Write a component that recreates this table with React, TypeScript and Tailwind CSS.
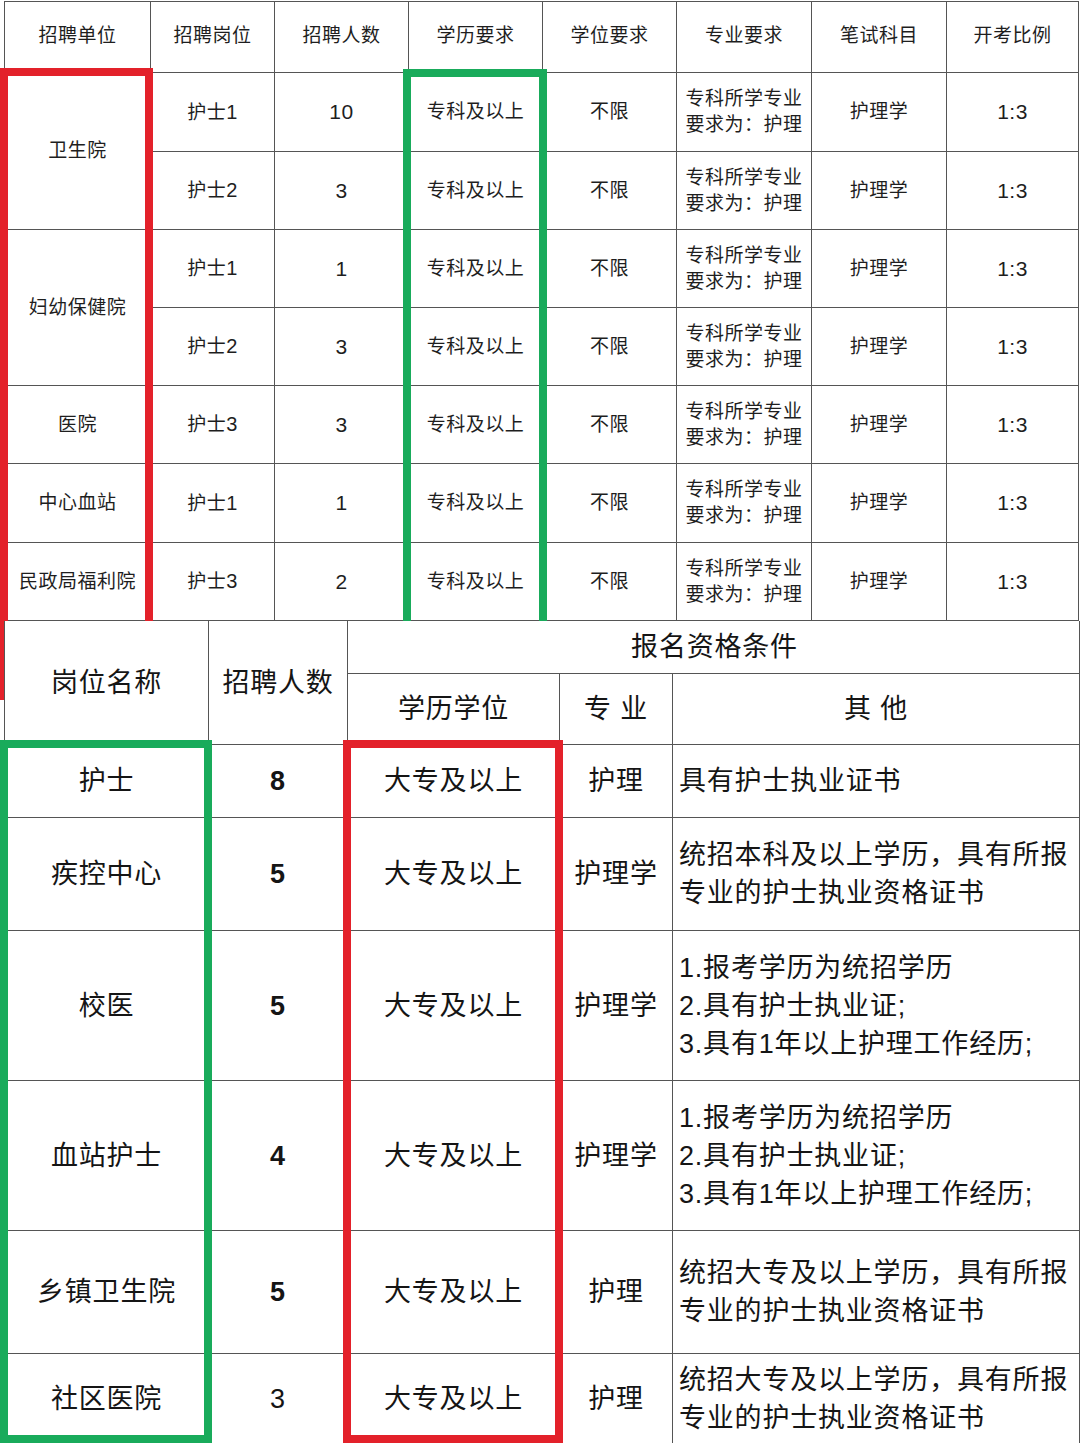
import React from "react";

const font = "font-['Liberation_Sans','Noto_Sans_CJK_SC',sans-serif]";

function C1({ children, className = "" }: { children: React.ReactNode; className?: string }) {
  return (
    <div className={`bg-white flex items-center justify-center text-center text-[19px] leading-[26px] tracking-[0.5px] text-[#1e1e1e] ${className}`}>
      {children}
    </div>
  );
}

function C2({ children, className = "" }: { children: React.ReactNode; className?: string }) {
  return (
    <div className={`bg-white flex items-center text-[27px] leading-[38px] tracking-[0.8px] text-[#151515] ${className}`}>
      {children}
    </div>
  );
}

const t1Rows: { unit?: string; span?: boolean; pos: string; n: string }[] = [
  { unit: "卫生院", span: true, pos: "护士1", n: "10" },
  { pos: "护士2", n: "3" },
  { unit: "妇幼保健院", span: true, pos: "护士1", n: "1" },
  { pos: "护士2", n: "3" },
  { unit: "医院", pos: "护士3", n: "3" },
  { unit: "中心血站", pos: "护士1", n: "1" },
  { unit: "民政局福利院", pos: "护士3", n: "2" },
];

const t2Rows: { name: string; n: string; bold: boolean; major: string; other: string[] }[] = [
  { name: "护士", n: "8", bold: true, major: "护理", other: ["具有护士执业证书"] },
  { name: "疾控中心", n: "5", bold: true, major: "护理学", other: ["统招本科及以上学历，具有所报", "专业的护士执业资格证书"] },
  { name: "校医", n: "5", bold: true, major: "护理学", other: ["1.报考学历为统招学历", "2.具有护士执业证;", "3.具有1年以上护理工作经历;"] },
  { name: "血站护士", n: "4", bold: true, major: "护理学", other: ["1.报考学历为统招学历", "2.具有护士执业证;", "3.具有1年以上护理工作经历;"] },
  { name: "乡镇卫生院", n: "5", bold: true, major: "护理", other: ["统招大专及以上学历，具有所报", "专业的护士执业资格证书"] },
  { name: "社区医院", n: "3", bold: false, major: "护理", other: ["统招大专及以上学历，具有所报", "专业的护士执业资格证书"] },
];

export default function App() {
  return (
    <div className={`relative w-[1080px] h-[1443px] bg-white overflow-hidden ${font}`}>
      {/* Table 1 */}
      <div className="pl-[4px] pt-[1px]">
        <div className="grid w-fit bg-[#555] p-px gap-px grid-cols-[145px_123px_133px_133px_133px_134px_134px_131px] grid-rows-[70px_78px_77px_77px_77px_77px_78px_77px]">
          {["招聘单位", "招聘岗位", "招聘人数", "学历要求", "学位要求", "专业要求", "笔试科目", "开考比例"].map((h) => (
            <C1 key={h} className="pb-[3px]">{h}</C1>
          ))}
          {t1Rows.map((r, i) => (
            <React.Fragment key={i}>
              {r.unit && <C1 className={r.span ? "row-span-2" : ""}>{r.unit}</C1>}
              <C1>
                <span>
                  {r.pos.slice(0, 2)}
                  <span className="text-[20px]">{r.pos.slice(2)}</span>
                </span>
              </C1>
              <C1 className="text-[21px]">{r.n}</C1>
              <C1>专科及以上</C1>
              <C1>不限</C1>
              <C1>
                <span>
                  专科所学专业
                  <br />
                  要求为：护理
                </span>
              </C1>
              <C1>护理学</C1>
              <C1 className="text-[21px]">1:3</C1>
            </React.Fragment>
          ))}
        </div>
      </div>

      {/* Table 1 highlight boxes */}
      <div className="absolute left-0 top-[68px] w-[153px] h-[632px] border-[8px] border-[#e3212a] z-10" />
      <div className="absolute left-[403px] top-[69px] w-[144px] h-[580px] border-[8px] border-[#19ab5b] z-10" />

      {/* Table 2 */}
      <div className="relative z-20 ml-[4px] w-fit">
        <div className="grid w-fit bg-[#555] px-px gap-px grid-cols-[203px_138px_211px_112px_406px] grid-rows-[52px_70px_72px_112px_149px_149px_122px_89px]">
          <C2 className="row-span-2 justify-center">岗位名称</C2>
          <C2 className="row-span-2 justify-center">招聘人数</C2>
          <C2 className="col-span-3 justify-center">
            <span className="pl-[2px]">报名资格条件</span>
          </C2>
          <C2 className="justify-center">学历学位</C2>
          <C2 className="justify-center">专 业</C2>
          <C2 className="justify-center">其 他</C2>
          {t2Rows.map((r, i) => (
            <React.Fragment key={i}>
              <C2 className="justify-center">{r.name}</C2>
              <C2 className={`justify-center ${r.bold ? "font-bold" : ""}`}>{r.n}</C2>
              <C2 className="justify-center">大专及以上</C2>
              <C2 className="justify-center">{r.major}</C2>
              <C2 className="pl-[6px] whitespace-nowrap">
                <div>
                  {r.other.map((l, j) => (
                    <div key={j}>{l}</div>
                  ))}
                </div>
              </C2>
            </React.Fragment>
          ))}
        </div>
      </div>

      {/* Table 2 highlight boxes */}
      <div className="absolute left-0 top-[740px] w-[212px] h-[703px] border-[8px] border-[#19ab5b] z-30" />
      <div className="absolute left-[343px] top-[740px] w-[220px] h-[703px] border-[8px] border-[#e3212a] z-30" />
    </div>
  );
}
